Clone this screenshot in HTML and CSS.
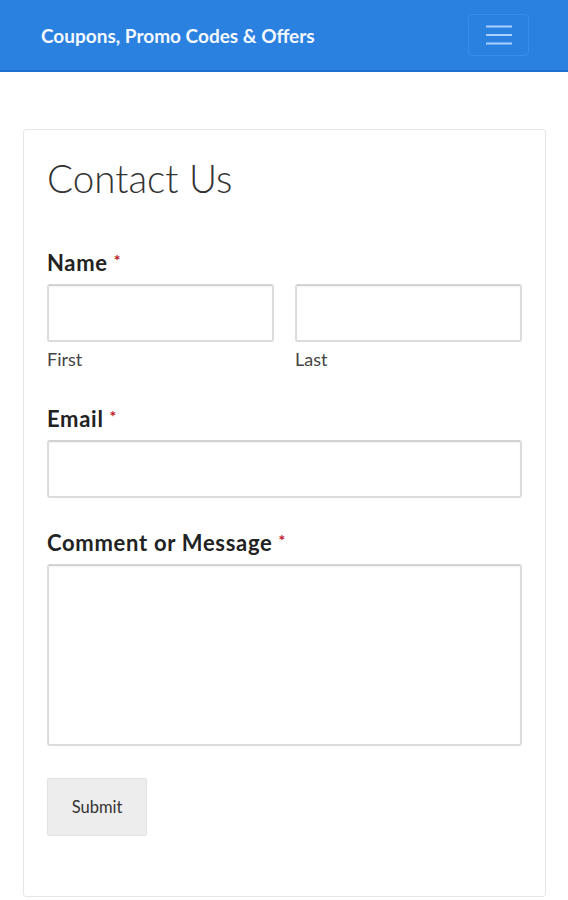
FILE: index.html
```html
<!DOCTYPE html>
<html lang="en">
<head>
<meta charset="utf-8">
<title>Contact Us</title>
<link rel="stylesheet" href="styles.css">
</head>
<body>
<header class="navbar">
  <a class="brand" href="#">Coupons, Promo Codes &amp; Offers</a>
  <button class="toggler" aria-label="Menu">
    <svg width="26" height="20" viewBox="0 0 26 20"><path d="M0 1.5h26M0 10h26M0 18.5h26" stroke="#a9d0ff" stroke-width="2.2" fill="none"/></svg>
  </button>
</header>
<main class="page">
  <section class="card">
    <h1 class="title">Contact Us</h1>
    <form class="form">
      <div class="field field-name">
        <label class="label">Name <span class="req">*</span></label>
        <div class="row">
          <div class="col">
            <input class="input" type="text">
            <span class="sub">First</span>
          </div>
          <div class="col">
            <input class="input" type="text">
            <span class="sub">Last</span>
          </div>
        </div>
      </div>
      <div class="field">
        <label class="label">Email <span class="req">*</span></label>
        <input class="input" type="email">
      </div>
      <div class="field">
        <label class="label">Comment or Message <span class="req">*</span></label>
        <textarea class="input textarea"></textarea>
      </div>
      <div class="actions">
        <button class="submit" type="button">Submit</button>
      </div>
    </form>
  </section>
</main>
</body>
</html>
```
FILE: styles.css
```css
* { box-sizing: border-box; }
html, body { margin: 0; padding: 0; }
body {
  font-family: Lato, "Open Sans", "Liberation Sans", sans-serif;
  background: #fff;
  color: #222;
  width: 568px;
  height: 900px;
  overflow: hidden;
}
.navbar {
  height: 72px;
  background: #2a81e0;
  border-bottom: 2px solid #1d6fcf;
  display: flex;
  align-items: center;
  justify-content: space-between;
  padding: 0 39px 0 41px;
}
.brand {
  color: #f4f8ff;
  font-weight: 700;
  font-size: 19px;
  text-decoration: none;
}
.toggler {
  width: 61px;
  height: 42px;
  background: transparent;
  border: 1px solid #3b8ce6;
  border-radius: 4px;
  display: flex;
  align-items: center;
  justify-content: center;
  padding: 0;
}
.page {
  padding: 57px 22px 0 23px;
}
.card {
  border: 1px solid #e6e6e6;
  border-radius: 3px;
  padding: 21px 23px 60px 23px;
  height: 768px;
}
.title {
  font-weight: 300;
  font-size: 38.6px;
  margin: 0 0 45px 0;
  color: #333;
  line-height: 54px;
}
.form { display: flex; flex-direction: column; }
.field { display: flex; flex-direction: column; margin-bottom: 32px; }
.field-name { margin-bottom: 36px; }
.label {
  font-weight: 700;
  font-size: 22px;
  letter-spacing: 0.7px;
  color: #222;
  line-height: 26px;
  margin-bottom: 8px;
}
.req { color: #c0141c; font-size: 16px; vertical-align: top; line-height: 20px; }
.row { display: flex; gap: 21px; }
.col { flex: 1; display: flex; flex-direction: column; }
.input {
  width: 100%;
  height: 58px;
  border: 2px solid #dcdcdc;
  border-top-color: #d2d2d2;
  border-radius: 3px;
  background: #fff;
  font-family: inherit;
  box-shadow: inset 0 1px 2px rgba(0,0,0,0.06);
}
.textarea { height: 182px; resize: none; }
.sub {
  font-size: 18px;
  color: #444;
  margin-top: 6px;
  line-height: 22px;
}
.actions { margin-top: 0; }
.submit {
  width: 100px;
  height: 58px;
  background: #ededed;
  border: 1px solid #e2e2e2;
  border-radius: 2px;
  font-family: inherit;
  font-size: 16.5px;
  color: #333;
}
```
